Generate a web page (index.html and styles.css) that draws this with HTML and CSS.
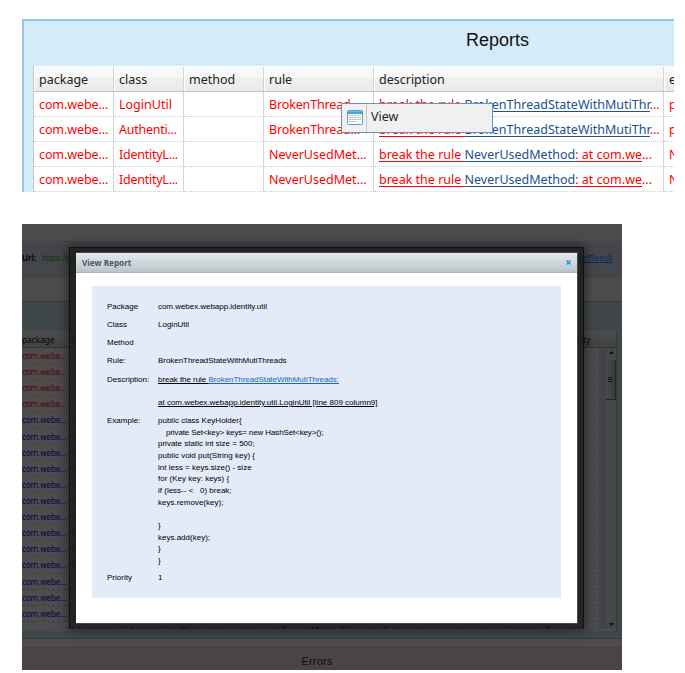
FILE: index.html
```
<!DOCTYPE html>
<html lang="en">
<head>
<meta charset="utf-8">
<title>Reports</title>
<link rel="stylesheet" href="styles.css">
</head>
<body>
<section class="reports">
  <h1>Reports</h1>
  <div class="grid">
    <div class="row head"><span>package</span><span>class</span><span>method</span><span>rule</span><span>description</span><span>e</span></div>
    <div class="row"><span class="pk">com.webe...</span><span>LoginUtil</span><span></span><span class="rule">BrokenThread...</span><span class="desc"><u>break the rule <a>BrokenThreadStateWithMutiThr</a></u>...</span><span>p</span></div>
    <div class="row"><span class="pk">com.webe...</span><span class="tight">Authenti...</span><span></span><span class="rule">BrokenThread...</span><span class="desc"><u>break the rule <a>BrokenThreadStateWithMutiThr</a></u>...</span><span>p</span></div>
    <div class="row"><span class="pk">com.webe...</span><span class="tight">IdentityL...</span><span></span><span>NeverUsedMet...</span><span class="desc"><u>break the rule <a>NeverUsedMethod</a>: at com.we</u>...</span><span>N</span></div>
    <div class="row"><span class="pk">com.webe...</span><span class="tight">IdentityL...</span><span></span><span>NeverUsedMet...</span><span class="desc"><u>break the rule <a>NeverUsedMethod</a>: at com.we</u>...</span><span>N</span></div>
  </div>
  <div class="menu">
    <div class="menu-icon">
      <svg width="16" height="15" viewBox="0 0 16 15"><rect x=".5" y=".5" width="15" height="14" rx="1" fill="#fff" stroke="#5c9fbe"/><path d="M0 1h16v3H0z" fill="#4ba3d5"/><path d="M1 1.500h14" stroke="#6dbbe6"/><path d="M2 5.500h12M2 7.500h12M2 9.500h12M2 11.500h8" stroke="#b4b8bb" stroke-dasharray="2 .6"/></svg>
    </div>
    <div class="menu-text">View</div>
  </div>
</section>
<section class="app">
  <div class="blank"></div>
  <div class="urlbar"><b>Url:</b><span class="url">https://Co</span><a>ExportResult</a></div>
  <div class="gap"></div>
  <div class="panel">
    <div class="mini">
      <div class="mini-head"><span>package</span><span>class</span><span class="prio">priority</span></div>
      <div class="mini-body">
        <div class="lines">
          <div class="line red"><span>com.webe...</span><span>LoginUtil</span></div>
          <div class="line red"><span>com.webe...</span><span>Authenti...</span></div>
          <div class="line red"><span>com.webe...</span><span>IdentityL...</span></div>
          <div class="line red"><span>com.webe...</span><span>IdentityL...</span></div>
          <div class="line"><span>com.webe...</span><span>Authenti...</span></div>
          <div class="line"><span>com.webe...</span><span>Authenti...</span></div>
          <div class="line"><span>com.webe...</span><span>Authenti...</span></div>
          <div class="line"><span>com.webe...</span><span>Authenti...</span></div>
          <div class="line"><span>com.webe...</span><span>Authenti...</span></div>
          <div class="line"><span>com.webe...</span><span>Authenti...</span></div>
          <div class="line"><span>com.webe...</span><span>Authenti...</span></div>
          <div class="line"><span>com.webe...</span><span>IdentityL...</span></div>
          <div class="line"><span>com.webe...</span><span>IdentityL...</span></div>
          <div class="line"><span>com.webe...</span><span>IdentityL...</span></div>
          <div class="line"><span>com.webe...</span><span>IdentityL...</span></div>
          <div class="line"><span>com.webe...</span><span>IdentityL...</span></div>
          <div class="line"><span>com.webe...</span><span>IdentityL...</span></div>
        </div>
        <div class="strip"></div>
        <div class="scroll">
          <svg width="10" height="9" viewBox="0 0 10 9"><path d="M3 6h5L5.500 3z" fill="#111"/></svg>
          <div class="thumb"><i></i><i></i><i></i></div>
          <svg class="down" width="10" height="9" viewBox="0 0 10 9"><path d="M3 3h5L5.500 6z" fill="#111"/></svg>
        </div>
      </div>
    </div>
  </div>
  <div class="split"></div>
  <div class="errors">Errors</div>
  <div class="dialog">
    <div class="under">IdentityL... &nbsp; &nbsp;isAuthenticateMethod &nbsp; &nbsp; break the rule PreventMethodInvocationInLoop: at com.webex.webapp.identity &nbsp; Prevent the method</div>
    <div class="window">
      <div class="title"><span>View Report</span><svg width="5" height="5" viewBox="0 0 5 5"><path d="M.5.5l4 4M4.500.5l-4 4" stroke="#159bf2" stroke-width="1.500"/></svg></div>
      <div class="content">
        <dl>
          <dt>Package</dt><dd class="path">com.webex.webapp.identity.util</dd>
          <dt>Class</dt><dd>LoginUtil</dd>
          <dt>Method</dt><dd></dd>
          <dt>Rule:</dt><dd class="path">BrokenThreadStateWithMutiThreads</dd>
          <dt>Description:</dt><dd class="about"><p><u>break the rule <a>BrokenThreadStateWithMutiThreads:</a></u></p><p><u>at com.webex.webapp.identity.util.LoginUtil [line 809 column9]</u></p></dd>
          <dt>Example:</dt><dd class="code">public class KeyHolder{
<span class="ind">private Set&lt;key&gt; keys= new HashSet&lt;key&gt;();</span>
private static int size = 500;
public void put(String key) {
int less = keys.size() - size
for (Key key: keys) {
if (less-- &lt; &nbsp; 0) break;
keys.remove(key);

}
keys.add(key);
}
}</dd>
          <dt>Priority</dt><dd>1</dd>
        </dl>
      </div>
    </div>
  </div>
</section>
</body>
</html>
```
FILE: styles.css
```
* { box-sizing: border-box; }
body { margin: 0; padding: 19px 0 0 22px; background: #fff; font-family: "Noto Sans", sans-serif; height: 673px; overflow: hidden; }

.reports { position: relative; width: 652px; height: 173px; border: solid #91cae0; border-width: 2px 0 0 2px; background: #d5ecf8; overflow: hidden; padding-left: 9px; }
h1 { margin: 0; height: 45px; width: 641px; padding-left: 433px; font: 18px/39px "Liberation Sans", sans-serif; color: #111; white-space: nowrap; }
.grid { border-left: 1px solid #c8c8c8; background: #fff; height: 130px; }
.row { display: grid; grid-template-columns: 80px 70px 80px 110px 290px 1fr; height: 25px; font-size: 12.5px; line-height: 26px; color: #f00; white-space: nowrap; }
.row > span { padding-left: 5px; border-right: 1px solid #d4d4d4; border-bottom: 1px dotted #ccc; overflow: hidden; }
.row > span:last-child { border-right: 0; }
.row > .pk { letter-spacing: -.1px; }
.row > .tight { letter-spacing: -.25px; }
.row > .rule { letter-spacing: -.15px; }
.head { height: 26px; color: #222; padding-top: 1px; }
.head > span { background: linear-gradient(#f8f8f8 0 45%, #f0f0f0 46%, #e9eaeb); border-bottom: 1px solid #c5c5c5; box-shadow: inset 1px 0 #fff; }
.desc a { color: #205090; }
u { text-underline-offset: 2px; }
a { text-decoration: underline; }

.menu { position: absolute; left: 317px; top: 82px; width: 152px; height: 30px; border: 1px solid #6e8fbd; background: #f0f0f0; display: flex; align-items: center; color: #222; font-size: 12.5px; }
.menu-icon { width: 25px; height: 28px; border-right: 1px solid #ccc; padding: 6px 0 0 5px; line-height: 0; }
.menu-text { padding-left: 4px; height: 28px; line-height: 26px; }

.app { position: relative; margin-top: 32px; width: 600px; height: 446px; background: #4c4c4c; overflow: hidden; }
.blank { height: 17px; }
.urlbar { height: 37px; background: #44464b; display: flex; font: 8.500px/35px "Liberation Sans", sans-serif; color: #080808; }
.urlbar b { width: 20px; }
.urlbar .url { color: #083c08; letter-spacing: -.1px; }
.urlbar a { margin-left: auto; margin-right: 10px; color: #062c5c; font-size: 8.500px; letter-spacing: -.1px; }
.gap { height: 23px; }
.panel { height: 338px; border: solid #2b3c43; border-width: 1px 0; background: #40474a; padding: 29px 5px 0 0; }
.mini { height: 300px; border-right: 1px solid #343839; background: #4c4c4c; }
.mini-head { display: flex; height: 17px; background: linear-gradient(#4c4c4c, #424242); border-bottom: 1px solid #353535; font-size: 8.300px; line-height: 18px; color: #080808; }
.mini-head span { width: 50px; }
.mini-head .prio { margin-left: 440px; }
.mini-body { display: flex; height: 281px; overflow: hidden; }
.lines { flex: 1; }
.line { height: 16.120px; border-bottom: 1px dashed #414141; display: flex; font-size: 8.200px; letter-spacing: -.15px; line-height: 15.500px; color: #05054c; white-space: nowrap; overflow: hidden; }
.line span { width: 50px; }
.red { color: #500506; }
.strip { width: 7px; background: #3e4449; }
.scroll { width: 10px; background: #474747; display: flex; flex-direction: column; line-height: 0; }
.thumb { margin-top: 3px; height: 40px; background: linear-gradient(90deg, #4a4a4a, #393939); border: solid #242424; border-width: 0 1px 1px 0; padding: 17px 3px 0 2px; }
.thumb i { display: block; height: 1px; background: #111; margin-bottom: 1px; }
.down { margin-top: auto; }
.split { height: 8px; }
.errors { height: 23px; border-top: 1px solid #543a3a; background: #4b4444; color: #0b0b0b; font: 11px/26px "Liberation Sans", sans-serif; text-align: center; padding-right: 10px; letter-spacing: .2px; }

.dialog { position: absolute; left: 47px; top: 23px; width: 515px; height: 382px; background: rgba(28, 28, 28, .82); border: solid #101010; border-width: 1px 1px 0; box-shadow: 0 0 10px 1px rgba(0, 0, 0, .55); padding: 4px 5px 0 6px; }
.under { position: absolute; left: 2px; right: 2px; bottom: 0; height: 5px; overflow: hidden; white-space: nowrap; color: #080832; font-size: 8.500px; line-height: 13px; }
.window { height: 372px; border: 1px solid #484848; border-left: 0; background: #fff; position: relative; }
.title { height: 20px; background: linear-gradient(#e6ebee, #b9c4ca); border-bottom: 1px solid #aab5bb; display: flex; justify-content: space-between; align-items: center; padding: 0 6px; font-size: 8.200px; font-weight: bold; color: #4b5963; }
.content { margin: 13px 16px 0 16px; height: 312px; background: #e3eaf8; padding: 12px 0 0 15px; color: #000; }
dl { margin: 0; display: grid; grid-template-columns: 51px 1fr; font: 8px/11.650px "Liberation Sans", sans-serif; }
dt, dd { margin: 0; min-height: 18.150px; padding-top: 3px; white-space: nowrap; }
.path { letter-spacing: -.04px; }
.about { height: 41.500px; }
.about p { margin: 0 0 11.700px; }
.about p:first-child { letter-spacing: -.05px; }
.about a { color: #1767c5; }
.about u { text-underline-offset: 1px; }
.code { white-space: pre; height: 157px; }
.ind { padding-left: 8px; letter-spacing: -.12px; }
```
